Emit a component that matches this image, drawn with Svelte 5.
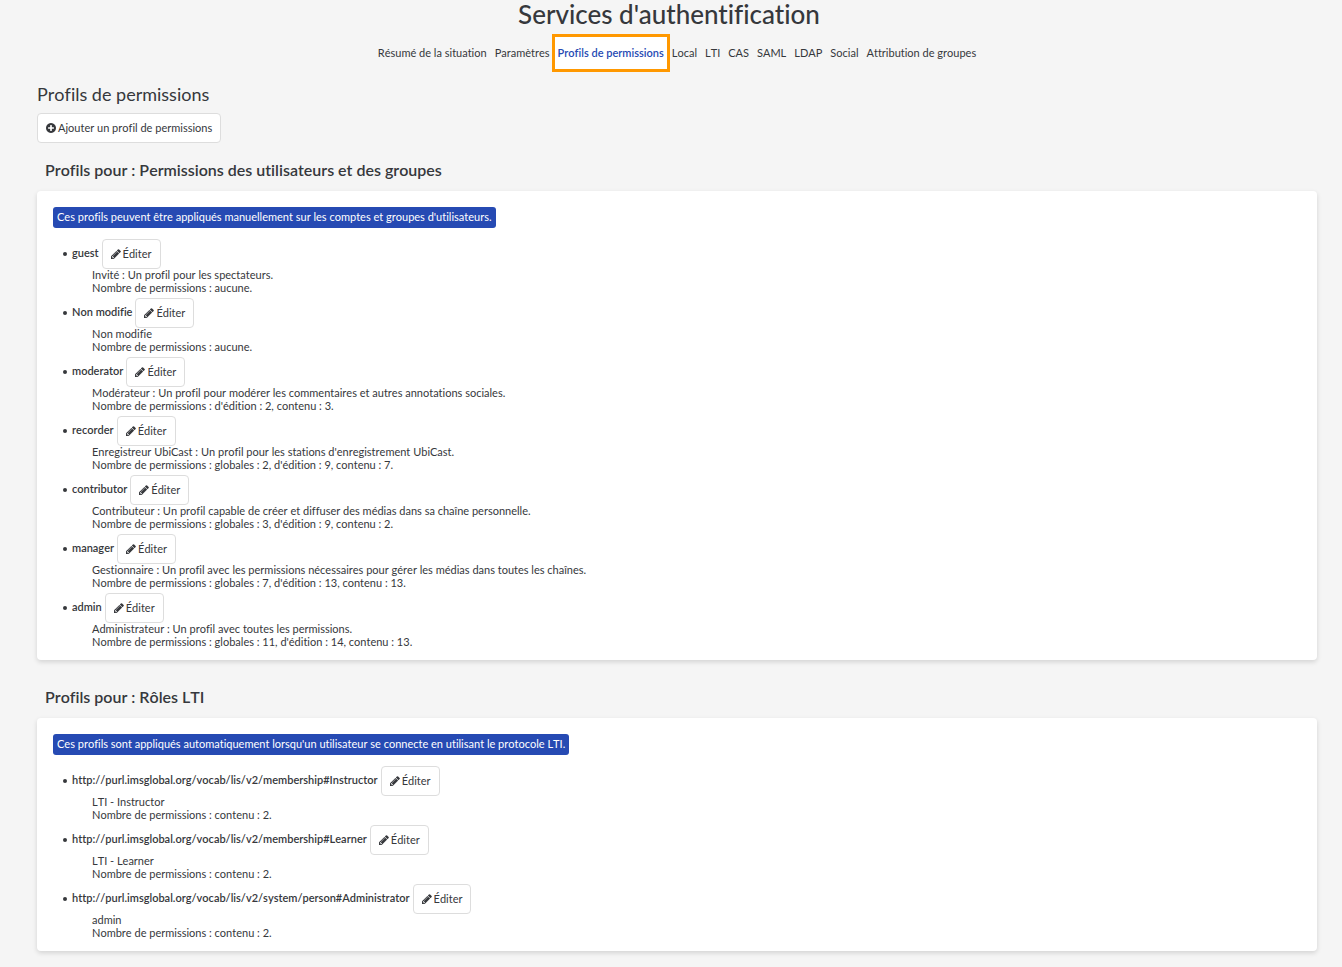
<script lang="ts">
	interface Profile {
		name: string;
		description: string;
		permissions: string;
	}

	interface ProfileGroup {
		title: string;
		notice: string;
		profiles: Profile[];
	}

	const tabs = [
		'Résumé de la situation',
		'Paramètres',
		'Profils de permissions',
		'Local',
		'LTI',
		'CAS',
		'SAML',
		'LDAP',
		'Social',
		'Attribution de groupes'
	];

	let activeTab = $state('Profils de permissions');

	const groups: ProfileGroup[] = [
		{
			title: 'Permissions des utilisateurs et des groupes',
			notice:
				"Ces profils peuvent être appliqués manuellement sur les comptes et groupes d'utilisateurs.",
			profiles: [
				{
					name: 'guest',
					description: 'Invité : Un profil pour les spectateurs.',
					permissions: 'aucune.'
				},
				{ name: 'Non modifie', description: 'Non modifie', permissions: 'aucune.' },
				{
					name: 'moderator',
					description:
						'Modérateur : Un profil pour modérer les commentaires et autres annotations sociales.',
					permissions: "d'édition : 2, contenu : 3."
				},
				{
					name: 'recorder',
					description:
						"Enregistreur UbiCast : Un profil pour les stations d'enregistrement UbiCast.",
					permissions: "globales : 2, d'édition : 9, contenu : 7."
				},
				{
					name: 'contributor',
					description:
						'Contributeur : Un profil capable de créer et diffuser des médias dans sa chaîne personnelle.',
					permissions: "globales : 3, d'édition : 9, contenu : 2."
				},
				{
					name: 'manager',
					description:
						'Gestionnaire : Un profil avec les permissions nécessaires pour gérer les médias dans toutes les chaînes.',
					permissions: "globales : 7, d'édition : 13, contenu : 13."
				},
				{
					name: 'admin',
					description: 'Administrateur : Un profil avec toutes les permissions.',
					permissions: "globales : 11, d'édition : 14, contenu : 13."
				}
			]
		},
		{
			title: 'Rôles LTI',
			notice:
				"Ces profils sont appliqués automatiquement lorsqu'un utilisateur se connecte en utilisant le protocole LTI.",
			profiles: [
				{
					name: 'http://purl.imsglobal.org/vocab/lis/v2/membership#Instructor',
					description: 'LTI - Instructor',
					permissions: 'contenu : 2.'
				},
				{
					name: 'http://purl.imsglobal.org/vocab/lis/v2/membership#Learner',
					description: 'LTI - Learner',
					permissions: 'contenu : 2.'
				},
				{
					name: 'http://purl.imsglobal.org/vocab/lis/v2/system/person#Administrator',
					description: 'admin',
					permissions: 'contenu : 2.'
				}
			]
		}
	];
</script>

<main>
	<h1>Services d'authentification</h1>

	<nav>
		{#each tabs as tab (tab)}
			<a href="#top" class:active={tab === activeTab} onclick={() => (activeTab = tab)}>{tab}</a>
		{/each}
	</nav>

	<h2>Profils de permissions</h2>
	<button type="button">
		<svg class="plus" viewBox="0 0 1536 1536" aria-hidden="true">
			<path
				d="M1216 832V704q0-26-19-45t-45-19H896V384q0-26-19-45t-45-19H704q-26 0-45 19t-19 45v256H384q-26 0-45 19t-19 45v128q0 26 19 45t45 19h256v256q0 26 19 45t45 19h128q26 0 45-19t19-45V896h256q26 0 45-19t19-45zm320-64q0 209-103 385.500T1153.500 1433 768 1536t-385.500-103T103 1153.500 0 768t103-385.500T382.500 103 768 0t385.500 103T1433 382.500 1536 768z"
			/>
		</svg>
		Ajouter un profil de permissions
	</button>

	{#each groups as group (group.title)}
		<section>
			<h3>Profils pour : {group.title}</h3>
			<div class="card">
				<p class="notice">{group.notice}</p>
				<ul>
					{#each group.profiles as profile (profile.name)}
						<li>
							<div class="profile">
								<span class="bullet"></span>
								<strong>{profile.name}</strong>
								<button type="button">
									<svg class="pencil" viewBox="0 0 1536 1536" aria-hidden="true">
										<path
											d="M363 1408l91-91-235-235-91 91v107h128v128h107zM886 480q0-22-22-22-10 0-17 7l-542 542q-7 7-7 17 0 22 22 22 10 0 17-7l542-542q7-7 7-17zm-54-192l416 416-832 832H0v-416zm683 96q0 53-37 90l-166 166-416-416 166-165q36-38 90-38 53 0 91 38l235 234q37 39 37 91z"
										/>
									</svg>
									Éditer
								</button>
							</div>
							<p class="details">
								{profile.description}<br />
								Nombre de permissions : {profile.permissions}
							</p>
						</li>
					{/each}
				</ul>
			</div>
		</section>
	{/each}
</main>

<style>
	:global(body) {
		background: #f5f5f5;
	}

	main {
		padding: 0 25px 14px 37px;
		font-family: Lato, sans-serif;
		font-size: 11px;
		line-height: 13px;
		font-kerning: none;
		font-variant-ligatures: none;
		color: #36383c;
	}

	h1,
	h2,
	h3,
	p,
	ul {
		margin: 0;
	}

	h1 {
		padding-right: 16px;
		font-size: 26px;
		line-height: 28px;
		font-weight: 500;
		font-kerning: normal;
		text-align: center;
	}

	nav {
		display: flex;
		flex-wrap: wrap;
		justify-content: center;
		margin: 8px 0 12px;
	}

	nav a {
		padding: 0 4px;
		line-height: 34px;
		color: inherit;
		text-decoration: none;
	}

	nav a.active {
		background: #fff;
		color: #264ab3;
		font-weight: 600;
		outline: 3px solid #ff9800;
		outline-offset: -1px;
	}

	h2 {
		margin-bottom: 7px;
		font-size: 18px;
		line-height: 24px;
		font-weight: 400;
	}

	h3 {
		padding: 15px 8px 9px;
		font-size: 16px;
		line-height: 24px;
		font-weight: 600;
	}

	button {
		display: inline-flex;
		align-items: center;
		height: 30px;
		padding: 0 8px 1px;
		gap: 2px;
		border: 1px solid #ddd;
		border-radius: 4px;
		background: #fff;
		color: inherit;
		font: inherit;
		font-kerning: inherit;
		cursor: pointer;
	}

	button:hover {
		background: #eee;
	}

	svg {
		width: 10px;
		height: 10px;
		fill: currentColor;
	}

	section {
		padding-bottom: 10px;
	}

	.card {
		padding: 16px 16px 11px;
		border-radius: 4px;
		background: #fff;
		box-shadow: 0 2px 5px rgba(0, 0, 0, 0.14);
	}

	.notice {
		width: fit-content;
		padding: 3px 4px 5px;
		border-radius: 3px;
		background: #264ab3;
		color: #fff;
	}

	ul {
		display: flex;
		flex-direction: column;
		gap: 4px;
		margin-top: 11px;
		padding: 0 0 1px 10px;
		list-style: none;
	}

	.profile {
		display: flex;
		align-items: center;
	}

	.bullet {
		width: 4px;
		height: 4px;
		margin-right: 5px;
		border-radius: 50%;
		background: #36383c;
	}

	strong {
		margin-right: 3px;
		padding-bottom: 3px;
		font-weight: 600;
	}

	.details {
		margin-top: -1px;
		padding-left: 29px;
	}
</style>
